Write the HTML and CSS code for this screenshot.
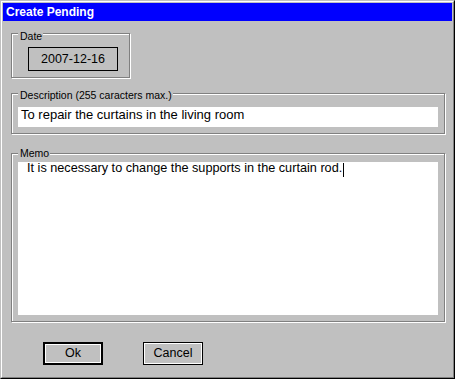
FILE: index.html
```html
<!DOCTYPE html>
<html>
<head>
<meta charset="utf-8">
<title>Create Pending</title>
<link rel="stylesheet" href="styles.css">
</head>
<body>
<div class="window">
  <div class="frame">
    <div class="titlebar">Create Pending</div>
    <div class="content">
      <div class="group group-date">
        <div class="group-label label-date">Date</div>
        <div class="date-field">2007-12-16</div>
      </div>
      <div class="group group-desc">
        <div class="group-label label-desc">Description (255 caracters max.)</div>
        <div class="text-input">To repair the curtains in the living room</div>
      </div>
      <div class="group group-memo">
        <div class="group-label label-memo">Memo</div>
        <div class="memo">It is necessary to change the supports in the curtain rod.<span class="caret"></span></div>
      </div>
      <div class="buttons">
        <button class="btn btn-default">Ok</button>
        <button class="btn">Cancel</button>
      </div>
    </div>
  </div>
</div>
</body>
</html>
```
FILE: styles.css
```css
html, body {
  margin: 0;
  padding: 0;
}
body {
  background: #c0c0c0;
  font-family: "Liberation Sans", Arial, sans-serif;
  color: #000;
}
.window {
  width: 455px;
  height: 379px;
  box-sizing: border-box;
  border: 1px solid;
  border-color: #c0c0c0 #000 #000 #c0c0c0;
}
.frame {
  height: 100%;
  box-sizing: border-box;
  border: 1px solid;
  border-color: #fff #808080 #808080 #fff;
  padding: 1px;
}
.titlebar {
  height: 18px;
  box-sizing: border-box;
  background: #0000ff;
  color: #fff;
  font-weight: bold;
  font-size: 12px;
  line-height: 17px;
  padding: 1px 0 0 3px;
  white-space: nowrap;
}
.content {
  padding: 12px 0 0 8px;
}
.group {
  box-sizing: border-box;
  width: 434px;
  border: 1px solid #808080;
  box-shadow: inset 1px 1px 0 #fff, 1px 1px 0 #fff;
  padding: 0 6px 6px 6px;
}
.group-label {
  width: fit-content;
  background: #c0c0c0;
  font-size: 10.5px;
  line-height: 12px;
  padding: 0 1px 0 2px;
  white-space: nowrap;
}
.group-date {
  width: 119px;
}
.label-date {
  margin-top: -4px;
}
.date-field {
  margin: 5px 0 0 10px;
  width: 90px;
  height: 24px;
  box-sizing: border-box;
  border: 1px solid #000;
  text-align: center;
  font-size: 12.5px;
  line-height: 22px;
}
.group-desc {
  margin-top: 15px;
}
.label-desc {
  margin-top: -5px;
}
.text-input {
  margin-top: 6px;
  height: 20px;
  background: #fff;
  font-size: 13px;
  line-height: 16px;
  padding-left: 3px;
  white-space: nowrap;
}
.group-memo {
  margin-top: 19px;
}
.label-memo {
  margin-top: -7px;
}
.memo {
  margin-top: 3px;
  height: 153px;
  background: #fff;
  font-size: 12.7px;
  line-height: 12px;
  padding-left: 9px;
  white-space: nowrap;
}
.caret {
  display: inline-block;
  width: 1px;
  height: 14px;
  background: #000;
  margin-left: 1px;
  vertical-align: -5px;
}
.buttons {
  margin: 20px 0 0 32px;
  display: flex;
  gap: 40px;
}
.btn {
  width: 60px;
  height: 23px;
  box-sizing: border-box;
  margin: 0;
  padding: 0;
  background: #c0c0c0;
  border: 1px solid #000;
  box-shadow: inset 0 0 0 1px #fff;
  font-family: "Liberation Sans", Arial, sans-serif;
  font-size: 12.5px;
  line-height: 21px;
  color: #000;
  border-radius: 0;
}
.btn-default {
  border-width: 2px;
  line-height: 19px;
}
```
